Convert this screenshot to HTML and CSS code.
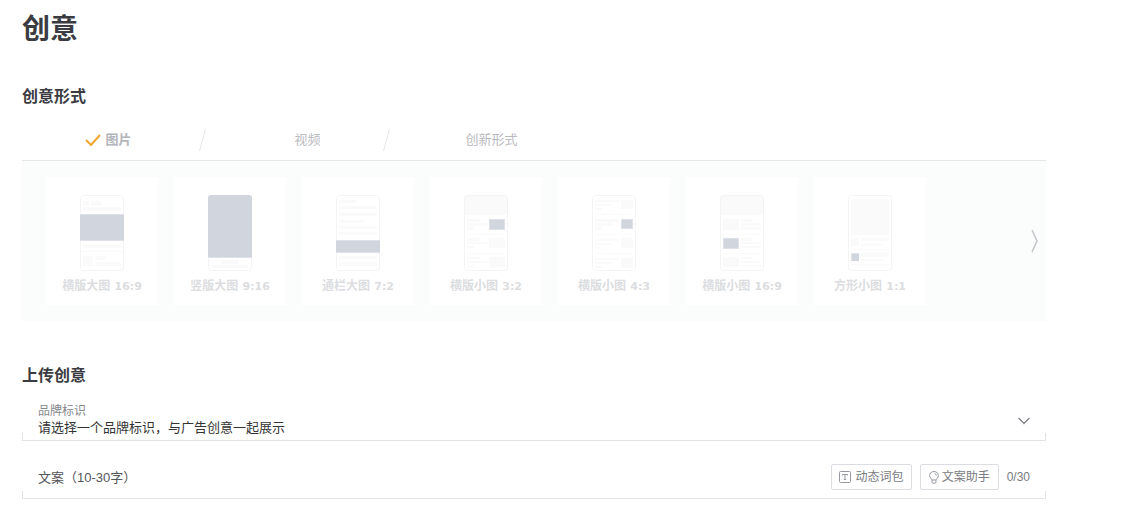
FILE: index.html
```html
<!DOCTYPE html>
<html lang="zh-CN">
<head>
<meta charset="utf-8">
<title>创意</title>
<link rel="stylesheet" href="styles.css">
</head>
<body>
<main class="page">
  <h1 class="title">创意</h1>

  <section class="section">
    <h2 class="subtitle">创意形式</h2>
    <nav class="tabs">
      <button type="button" class="tab tab-active">
        <svg class="check" width="16" height="12" viewBox="0 0 16 12"><path d="M1 6l5 5 9-10"/></svg>
        <span>图片</span>
      </button>
      <svg class="slash" width="7" height="22" viewBox="0 0 7 22"><path d="M6.500 0L.5 22"/></svg>
      <button type="button" class="tab">视频</button>
      <svg class="slash" width="7" height="22" viewBox="0 0 7 22"><path d="M6.500 0L.5 22"/></svg>
      <button type="button" class="tab">创新形式</button>
    </nav>
    <div class="panel">
      <div class="cards">
        <button type="button" class="card">
          <svg class="phone" width="44" height="76" viewBox="0 0 44 76">
            <rect class="frame" x=".5" y=".5" width="43" height="75" rx="3"/>
            <path class="soft" d="M3 6h6v4H3zM11 6h11v4H11zM3 12h38v4H3zM3 49h38v4H3zM1 56h42v1H1zM3 61h10v10H3zM15 61h11v4H15zM15 67h26v4H15z"/>
            <path class="edge" d="M0 19h44v27H0z"/><path class="fill" d="M0 20h44v25H0z"/>
          </svg>
          <span class="name">横版大图 <span class="ratio">16:9</span></span>
        </button>
        <button type="button" class="card">
          <svg class="phone" width="44" height="76" viewBox="0 0 44 76">
            <rect class="frame" x=".5" y=".5" width="43" height="75" rx="3"/>
            <path class="soft" d="M13 65h18v4H13zM4 70h36v3H4z"/>
            <path class="edge" d="M0 62h44v1H0z"/><path class="fill" d="M0 62V3q0-3 3-3h38q3 0 3 3v59z"/>
          </svg>
          <span class="name">竖版大图 <span class="ratio">9:16</span></span>
        </button>
        <button type="button" class="card">
          <svg class="phone" width="44" height="76" viewBox="0 0 44 76">
            <rect class="frame" x=".5" y=".5" width="43" height="75" rx="3"/>
            <path class="soft" d="M3 5h17v3H3zM3 11h38v3H3zM3 18h38v3H3zM3 25h26v3H3zM3 31h38v3H3zM3 37h38v3H3zM3 61h38v3H3zM3 67h38v4H3z"/>
            <path class="edge" d="M0 45h44v13H0z"/><path class="fill" d="M0 46h44v11H0z"/>
          </svg>
          <span class="name">通栏大图 <span class="ratio">7:2</span></span>
        </button>
        <button type="button" class="card">
          <svg class="phone" width="44" height="76" viewBox="0 0 44 76">
            <path class="soft" d="M1 1h42v19H1zM3 24h13v3H3zM3 28h20v3H3zM3 32h7v3H3zM3 39h38v1H3zM3 43h13v3H3zM3 47h20v2H3zM3 51h7v2H3zM25 43h16v10H25zM3 58h38v1H3zM3 62h13v2H3zM3 66h20v2H3zM3 70h7v2H3zM25 62h16v10H25z"/>
            <rect class="frame" x=".5" y=".5" width="43" height="75" rx="3"/>
            <path class="edge" d="M25 24h16v11H25z"/><path class="fill" d="M26 25h14v9H26z"/>
          </svg>
          <span class="name">横版小图 <span class="ratio">3:2</span></span>
        </button>
        <button type="button" class="card">
          <svg class="phone" width="44" height="76" viewBox="0 0 44 76">
            <rect class="frame" x=".5" y=".5" width="43" height="75" rx="3"/>
            <path class="soft" d="M3 5h24v2H3zM3 9h18v2H3zM3 13h7v2H3zM29 5h12v9H29zM3 19h38v1H3zM3 24h24v3H3zM3 28h18v3H3zM3 32h7v3H3zM3 39h38v1H3zM3 44h24v2H3zM3 48h18v2H3zM3 52h7v2H3zM29 43h12v10H29zM3 58h38v1H3zM3 63h24v2H3zM3 67h18v2H3zM3 71h7v2H3zM29 63h12v10H29z"/>
            <path class="edge" d="M29 24h12v10H29z"/><path class="fill" d="M30 25h10v8H30z"/>
          </svg>
          <span class="name">横版小图 <span class="ratio">4:3</span></span>
        </button>
        <button type="button" class="card">
          <svg class="phone" width="44" height="76" viewBox="0 0 44 76">
            <path class="soft" d="M1 1h42v19H1zM3 24h16v11H3zM21 24h11v3H21zM21 28h20v3H21zM21 32h20v3H21zM3 39h38v1H3zM21 43h11v3H21zM21 47h20v2H21zM21 51h20v2H21zM3 58h38v1H3zM3 62h16v10H3zM21 62h11v2H21zM21 66h20v2H21zM21 70h20v2H21z"/>
            <rect class="frame" x=".5" y=".5" width="43" height="75" rx="3"/>
            <path class="edge" d="M3 43h16v11H3z"/><path class="fill" d="M4 44h14v9H4z"/>
          </svg>
          <span class="name">横版小图 <span class="ratio">16:9</span></span>
        </button>
        <button type="button" class="card">
          <svg class="phone" width="44" height="76" viewBox="0 0 44 76">
            <rect class="frame" x=".5" y=".5" width="43" height="75" rx="3"/>
            <path class="soft" d="M3 4h38v36H3zM3 43h8v8H3zM13 43h28v3H13zM13 49h22v2H13zM3 54h38v1H3zM13 58h28v4H13zM13 64h22v2H13zM3 69h38v1H3z"/>
            <path class="edge" d="M3 58h8v8H3z"/><path class="fill" d="M4 59h7v7H4z"/>
          </svg>
          <span class="name">方形小图 <span class="ratio">1:1</span></span>
        </button>
      </div>
      <button type="button" class="next" aria-label="下一页">
        <svg width="7" height="24" viewBox="0 0 7 24"><path d="M1 1l5 11-5 11"/></svg>
      </button>
    </div>
  </section>

  <section class="section">
    <h2 class="subtitle">上传创意</h2>
    <div class="field brand">
      <div class="stack">
        <label class="caption" for="brand">品牌标识</label>
        <select id="brand" class="select"><option>请选择一个品牌标识，与广告创意一起展示</option></select>
      </div>
      <svg class="chevron" width="12" height="8" viewBox="0 0 12 8"><path d="M.7 1L6 6.500 11.300 1"/></svg>
    </div>
    <div class="field copy">
      <input class="input" type="text" aria-label="文案" placeholder="文案（10-30字）">
      <button type="button" class="tool">
        <svg class="icon" width="12" height="12" viewBox="0 0 12 12"><rect x=".5" y=".5" width="11" height="11" rx="1"/><path d="M3.500 4.500v-1h5v1M6 3.500v5M4.800 8.500h2.400"/></svg>
        动态词包
      </button>
      <button type="button" class="tool tool-tight">
        <svg class="icon" width="10" height="13" viewBox="0 0 10 13"><path d="M3 9C2.500 7.500.6 6.800.6 4.600a4.400 4.100 0 0 1 8.800 0C9.400 6.800 7.500 7.500 7 9zM3 9v2q0 1.400 2 1.400T7 11V9M5.500 2.500q1.600.2 1.800 1.900"/></svg>
        文案助手
      </button>
      <span class="count">0/30</span>
    </div>
  </section>
</main>
</body>
</html>
```

FILE: styles.css
```css
* { box-sizing: border-box; }
body {
  margin: 0;
  background: #fff;
  color: #3b3c42;
  font: 13px/20px "Liberation Sans", "Noto Sans CJK SC", sans-serif;
}
button, select, input {
  margin: 0;
  padding: 0;
  border: 0;
  background: none;
  color: inherit;
  font: inherit;
}
svg { flex: none; fill: none; }
.page { padding: 12px 79px 16px 22px; }
.title { margin: 0; font-size: 28px; line-height: 36px; }
.section { margin-top: 37px; }
.section + .section { margin-top: 43px; }
.subtitle { margin: 0; font-size: 16px; font-weight: 700; line-height: 24px; }

.tabs {
  display: flex;
  align-items: center;
  height: 52px;
  padding-top: 11px;
  border-bottom: 1px solid #e4e5e8;
}
.tab {
  display: flex;
  align-items: center;
  justify-content: center;
  gap: 4px;
  width: 177px;
  padding-left: 26px;
  color: #b9babe;
}
.tab-active { padding: 0 4px 0 0; color: #b3b5ba; font-weight: 700; }
.check { stroke: #f0a52e; stroke-width: 2; }
.slash { stroke: #e6e7eb; }

.panel {
  display: flex;
  align-items: center;
  justify-content: space-between;
  padding: 16px 8px 16px 24px;
  background: #fbfdfc;
}
.cards { display: flex; gap: 16px; }
.card {
  display: flex;
  flex-direction: column;
  align-items: center;
  gap: 6px;
  width: 112px;
  height: 128px;
  padding-top: 18px;
  background: #fff;
}
.frame { stroke: #f4f4f5; }
.soft { fill: #fafafb; }
.edge { fill: #dee1e7; }
.fill { fill: #d0d5de; }
.name {
  color: #dcdde0;
  font-size: 12px;
  font-weight: 700;
  line-height: 18px;
  white-space: nowrap;
}
.ratio { margin-left: 1px; font-family: "DejaVu Sans", sans-serif; font-size: 11px; }
.next { display: flex; stroke: #c3c5cb; stroke-width: 1.5; }

.field {
  position: relative;
  display: flex;
  align-items: center;
  padding: 0 16px;
  border-bottom: 1px solid #e2e3e6;
}
.field::before, .field::after {
  content: "";
  position: absolute;
  bottom: 0;
  width: 1px;
  height: 7px;
  background: #e2e3e6;
}
.field::before { left: 0; }
.field::after { right: 0; }
.brand { margin-top: 14px; padding-bottom: 4px; }
.stack { display: flex; flex: 1; flex-direction: column; }
.caption { color: #85878c; font-size: 12px; line-height: 18px; }
.select { appearance: none; height: 16px; line-height: 16px; color: #333; }
.chevron { margin-top: 4px; stroke: #85878c; stroke-width: 1.5; }
.copy { gap: 8px; padding-top: 23px; padding-bottom: 8px; }
.input { flex: 1; min-width: 0; height: 26px; }
.input::placeholder { color: #55565b; opacity: 1; }
.tool {
  display: flex;
  align-items: center;
  gap: 5px;
  height: 26px;
  padding: 0 7px;
  border: 1px solid #dcdde2;
  border-radius: 2px;
  color: #797b81;
  font-size: 12px;
}
.tool-tight { gap: 3px; padding: 0 8px; }
.icon { stroke: #989aa1; }
.count { color: #797b81; font-size: 12px; }
```
